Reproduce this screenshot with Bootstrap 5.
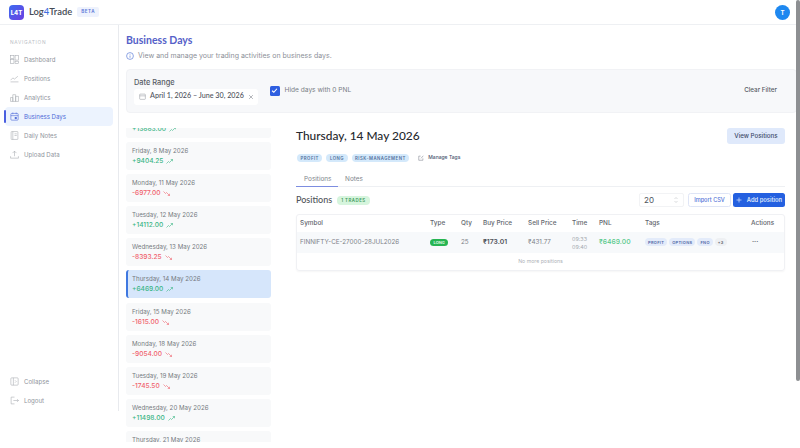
<!DOCTYPE html>
<html lang="en">
<head>
    <meta charset="UTF-8">
    <meta name="viewport" content="width=device-width, initial-scale=1.0">
    <title>Log4Trade - Business Days</title>
    <link href="https://cdn.jsdelivr.net/npm/bootstrap@5.3.0/dist/css/bootstrap.min.css" rel="stylesheet">
    <style>
        html, body { height: 100%; overflow: hidden; }
        body { font-family: "Inter", "Liberation Sans", sans-serif; font-size: 6.5px; color: #555b66; background: #fff; }
        .head-font { font-family: "Lato", "Inter", sans-serif; }
        svg { flex-shrink: 0; }

        .page-frame { height: 448px; width: 800px; position: relative; }
        .top-bar { height: 25px; padding: 0 9px 0 9px; border-bottom: 1px solid #eef0f3; }
        .logo-box { width: 15px; height: 15px; border-radius: 4px; background: linear-gradient(135deg, #3b6cf0, #6d3fe0); color: #fff; font-size: 6px; font-weight: 800; }
        .logo-name { font-size: 9.4px; font-weight: 600; color: #444a55; margin-left: 5px; font-family: "Lato", "Inter", sans-serif; }
        .logo-name b { color: #3f6fe0; font-weight: 600; }
        .beta-tag { font-size: 4.6px; letter-spacing: .5px; background: #eef2fd; color: #5b78d8; border-radius: 2px; padding: 2px 4px; margin-left: 5px; font-weight: 600; }
        .user-dot { width: 15px; height: 15px; border-radius: 50%; background: #1e88f0; color: #fff; font-size: 6px; font-weight: 700; margin-right: 1px; }

        .side-col { width: 119px; height: 386px; border-right: 1px solid #e8eaee; padding: 14px 5px 0 5px; flex-shrink: 0; }
        .side-label { font-size: 4.8px; letter-spacing: .7px; color: #b9bdc4; padding-left: 5px; margin-bottom: 4px; line-height: 7px; }
        .side-link { height: 19px; padding-left: 5px; color: #8f949c; font-size: 6.1px; border-radius: 4px; gap: 5px; }
        .side-link svg { width: 9px; height: 9px; flex-shrink: 0; }
        .side-on { background: #ecf3fe; color: #4f6bd8; position: relative; }
        .side-on::before { content: ""; position: absolute; left: -1px; top: 3px; bottom: 3px; width: 1.5px; background: #4a5fe0; border-radius: 1px; }
        .side-foot { margin-top: auto; padding-bottom: 1.5px; }
        .side-foot .side-link { height: 18.5px; }

        .main-col { padding: 9px 3px 0 7px; min-width: 0; }
        .page-title { font-size: 10.5px; font-weight: 700; color: #5561c8; line-height: 13px; }
        .page-sub { font-size: 7px; color: #8c9098; margin-top: 4px; line-height: 10px; gap: 4px; }
        .filter-box { height: 44px; background: #f7f8fa; border: 1px solid #f1f2f5; border-radius: 4px; margin-top: 8px; padding: 0 9px 0 7px; }
        .filter-label { font-size: 7.4px; font-weight: 500; color: #565b65; line-height: 9px; margin-bottom: 2px; }
        .date-field { width: 124px; height: 16px; background: #fff; border-radius: 3px; padding: 0 5px; color: #4f545d; font-size: 7.2px; font-weight: 500; gap: 4px; white-space: nowrap; font-family: "Lato", "Inter", sans-serif; }
        .check-mark { width: 9.5px; height: 9.5px; background: #2f5fe0; border-radius: 1.5px; }
        .hide-label { font-size: 6.6px; color: #787d85; margin-left: 5px; }
        .clear-btn { font-size: 6.3px; font-weight: 500; color: #575c65; margin-right: 10px; }

        .content-row { gap: 25px; margin-top: 15px; padding-right: 8px; }
        .day-list { width: 145px; height: 314px; overflow-y: scroll; scrollbar-width: none; flex-shrink: 0; }
        .day-item { height: 28px; margin-bottom: 4.1px; background: #f8f9fa; border-radius: 3px; padding: 4px 0 0 6px; }
        .day-name { font-size: 6.2px; color: #75797f; line-height: 10px; }
        .day-pnl { font-size: 6.6px; font-weight: 500; line-height: 11px; gap: 3px; }
        .pnl-up { color: #3bb585; }
        .pnl-down { color: #f0616d; }
        .day-on { background: #d6e6fb; border-left: 2px solid #3f78e0; padding-left: 4px; }

        .detail-col { min-width: 0; padding-right: 4px; }
        .detail-head { height: 16px; }
        .detail-title { font-size: 11.9px; font-weight: 500; color: #26292e; }
        .view-btn { width: 58px; height: 16px; padding: 0; background: #dfe9fb; border: 0; border-radius: 3px; font-size: 6.2px; font-weight: 500; color: #3d4a6a; }
        .tag-row { margin-top: 10px; height: 8px; gap: 4px; padding-left: 1px; }
        .tag-pill { font-size: 4.3px; letter-spacing: .5px; font-weight: 600; background: #d4e9fb; color: #53719b; border-radius: 4px; padding: 1.5px 3.5px; line-height: 5px; }
        .manage-tags { font-size: 5px; font-weight: 500; color: #4c5370; margin-left: 5px; gap: 4px; }
        .tab-bar { margin-top: 9px; height: 15.5px; border-bottom: 1px solid #eef0f3; }
        .tab-item { font-size: 6.4px; color: #80858c; padding: 0 8px; line-height: 16px; width: 42px; text-align: center; }
        .tab-on { border-bottom: 1px solid #7d8de0; height: 15.5px; }
        .tab-next { width: 32px; padding: 0; }

        .pos-row { height: 14px; margin-top: 6.5px; }
        .pos-title { font-size: 9px; font-weight: 500; color: #4f535a; }
        .count-tag { font-size: 4.4px; letter-spacing: .5px; font-weight: 600; background: #d6f5dd; color: #3f9a5c; border-radius: 4px; padding: 2px 4px; line-height: 5px; margin-left: 5px; }
        .size-box { width: 45px; height: 14px; background: #fff; border: 1px solid #f2f3f5; border-radius: 2px; padding: 0 5px 0 4px; font-size: 8px; color: #50555d; }
        .import-btn { width: 43px; height: 14px; padding: 0; margin-left: 4px; background: #fff; border: 1px solid #dfe5f6; border-radius: 2.5px; font-size: 5.6px; font-weight: 500; color: #5474d8; }
        .add-btn { width: 52px; height: 14px; padding: 0; margin-left: 2px; background: #2460e0; border: 0; border-radius: 2.5px; font-size: 5.8px; font-weight: 600; color: #dce6fb; gap: 5px; }

        .trade-wrap { margin-top: 7px; border: 1px solid #f0f1f4; border-radius: 3px; box-shadow: 0 1px 2px rgba(0, 0, 0, .04); }
        .trade-table { table-layout: fixed; width: 100%; margin: 0; --bs-table-bg: transparent; }
        .trade-table th { font-size: 6.4px; font-weight: 500; color: #62666d; height: 17px; padding: 0 0 0 3px; vertical-align: middle; border: 0; }
        .trade-table td { font-size: 6.3px; color: #7d8188; height: 21px; padding: 0 0 0 3px; vertical-align: middle; border: 0; }
        .trade-table .trade-row td { background: #f7f9fb; }
        .trade-table .empty-cell { height: 17px; padding: 0; text-align: center; font-size: 5.2px; color: #aeb2b8; }
        .w-sym { width: 130px; }
        .w-type { width: 31px; }
        .w-qty { width: 22px; }
        .w-buy { width: 45px; }
        .w-sell { width: 44px; }
        .w-time { width: 27px; }
        .w-pnl { width: 46px; }
        .w-tags { width: 106px; }
        .long-tag { font-size: 4px; font-weight: 700; background: #27b552; color: #d9f6e2; border-radius: 4px; padding: 1.5px 3.5px; line-height: 4px; display: inline-block; }
        .trade-table td.buy-val { font-weight: 600; color: #4e5259; font-size: 6.8px; }
        .trade-table td.time-val { font-size: 5.4px; line-height: 8px; color: #a5a9af; }
        .trade-table td.pnl-val { font-size: 6.8px; font-weight: 500; color: #57c98b; }
        .trade-table td.dots-cell { color: #62666d; font-weight: 700; padding-left: 4px; }
        .mini-tag { font-size: 4px; letter-spacing: .3px; font-weight: 600; background: #e3ebfa; color: #5069a6; border-radius: 4px; padding: 1.5px 3px; line-height: 5px; margin-right: 2px; display: inline-block; }
        .mini-more { background: #eef0f3; color: #62666d; }

        .scroll-thumb { position: absolute; top: 0; right: 0; width: 4px; height: 381px; background: #8d8f92; border-radius: 2px; }
    </style>
</head>
<body>
    <div class="page-frame d-flex flex-column">
        <header class="top-bar d-flex align-items-center justify-content-between">
            <div class="d-flex align-items-center">
                <div class="logo-box d-flex align-items-center justify-content-center">L4T</div>
                <span class="logo-name">Log<b>4</b>Trade</span>
                <span class="beta-tag">BETA</span>
            </div>
            <div class="user-dot d-flex align-items-center justify-content-center">T</div>
        </header>

        <div class="d-flex flex-grow-1">
            <nav class="side-col d-flex flex-column">
                <div class="side-label">NAVIGATION</div>
                <div class="side-link d-flex align-items-center">
                    <svg viewBox="0 0 16 16" fill="none" stroke="#a5a9af" stroke-width="1"><rect x="1" y="1" width="6" height="5"/><rect x="9" y="1" width="6" height="8"/><rect x="1" y="8" width="6" height="7"/><rect x="9" y="11" width="6" height="4"/></svg>
                    Dashboard
                </div>
                <div class="side-link d-flex align-items-center">
                    <svg viewBox="0 0 16 16" fill="none" stroke="#a5a9af" stroke-width="1"><path d="M1 14h14M1 11l4-4 3 2 6-5"/></svg>
                    Positions
                </div>
                <div class="side-link d-flex align-items-center">
                    <svg viewBox="0 0 16 16" fill="none" stroke="#a5a9af" stroke-width="1"><path d="M1 15V8h4v7M5 15V3h5v12M10 15V6h5v9M1 15h14"/></svg>
                    Analytics
                </div>
                <div class="side-link side-on d-flex align-items-center">
                    <svg viewBox="0 0 16 16" fill="none" stroke="#4f6bd8" stroke-width="1.1"><rect x="1.5" y="2.5" width="13" height="12" rx="1.5"/><path d="M1.5 6.5h13M5 1v3M11 1v3"/><rect x="9" y="9.5" width="2.5" height="2.5" fill="#4f6bd8"/></svg>
                    Business Days
                </div>
                <div class="side-link d-flex align-items-center">
                    <svg viewBox="0 0 16 16" fill="none" stroke="#a5a9af" stroke-width="1"><rect x="2" y="1" width="12" height="14" rx="1"/><path d="M5 1v14M8 5h4M8 8h4"/></svg>
                    Daily Notes
                </div>
                <div class="side-link d-flex align-items-center">
                    <svg viewBox="0 0 16 16" fill="none" stroke="#a5a9af" stroke-width="1"><path d="M8 11V2M4.5 5.5 8 2l3.5 3.5M1 11v3.5h14V11"/></svg>
                    Upload Data
                </div>
                <div class="side-foot">
                    <div class="side-link d-flex align-items-center">
                        <svg viewBox="0 0 16 16" fill="none" stroke="#a5a9af" stroke-width="1"><rect x="1.5" y="1.5" width="13" height="13" rx="1.5"/><path d="M6 1.5v13M9 6l2 2-2 2"/></svg>
                        Collapse
                    </div>
                    <div class="side-link d-flex align-items-center">
                        <svg viewBox="0 0 16 16" fill="none" stroke="#a5a9af" stroke-width="1"><path d="M8 2H2v12h6M6 8h9M12.5 5.5 15 8l-2.5 2.5"/></svg>
                        Logout
                    </div>
                </div>
            </nav>

            <main class="main-col flex-grow-1">
                <div class="page-title head-font">Business Days</div>
                <div class="page-sub d-flex align-items-center">
                    <svg width="8" height="8" viewBox="0 0 16 16" fill="none" stroke="#5f7fd8" stroke-width="1.4"><circle cx="8" cy="8" r="6.8"/><path d="M8 7v4.5M8 4.3v1.2"/></svg>
                    View and manage your trading activities on business days.
                </div>

                <section class="filter-box d-flex align-items-center justify-content-between">
                    <div class="d-flex align-items-center">
                        <div>
                            <div class="filter-label">Date Range</div>
                            <div class="date-field d-flex align-items-center">
                                <svg width="7" height="7" viewBox="0 0 16 16" fill="none" stroke="#9a9ea5" stroke-width="1.3"><rect x="1.5" y="2.5" width="13" height="12" rx="1.5"/><path d="M1.5 6.5h13"/></svg>
                                <span class="flex-grow-1">April 1, 2026 – June 30, 2026</span>
                                <svg width="6" height="6" viewBox="0 0 16 16" fill="none" stroke="#83878e" stroke-width="1.6"><path d="M3 3l10 10M13 3 3 13"/></svg>
                            </div>
                        </div>
                        <div class="d-flex align-items-center ms-2 ps-1">
                            <div class="check-mark d-flex align-items-center justify-content-center">
                                <svg width="7" height="7" viewBox="0 0 16 16" fill="none" stroke="#fff" stroke-width="2.6"><path d="M2.5 8.5 6.5 12 13.5 4"/></svg>
                            </div>
                            <span class="hide-label">Hide days with 0 PNL</span>
                        </div>
                    </div>
                    <span class="clear-btn">Clear Filter</span>
                </section>

                <div class="content-row d-flex">
                    <div class="day-list" id="dayList">
                        <div class="day-item"><div class="day-name">Thursday, 7 May 2026</div><div class="day-pnl pnl-up d-flex align-items-center">+13883.00 <svg width="7" height="5" viewBox="0 0 14 10" fill="none" stroke="currentColor" stroke-width="1.2"><path d="M1 9l4-4 2 2 6-6M9.5 1H13v3.5"/></svg></div></div>
                        <div class="day-item"><div class="day-name">Friday, 8 May 2026</div><div class="day-pnl pnl-up d-flex align-items-center">+9404.25 <svg width="7" height="5" viewBox="0 0 14 10" fill="none" stroke="currentColor" stroke-width="1.2"><path d="M1 9l4-4 2 2 6-6M9.5 1H13v3.5"/></svg></div></div>
                        <div class="day-item"><div class="day-name">Monday, 11 May 2026</div><div class="day-pnl pnl-down d-flex align-items-center">-6977.00 <svg width="7" height="5" viewBox="0 0 14 10" fill="none" stroke="currentColor" stroke-width="1.2"><path d="M1 1l4 4 2-2 6 6M9.5 9H13V5.5"/></svg></div></div>
                        <div class="day-item"><div class="day-name">Tuesday, 12 May 2026</div><div class="day-pnl pnl-up d-flex align-items-center">+14112.00 <svg width="7" height="5" viewBox="0 0 14 10" fill="none" stroke="currentColor" stroke-width="1.2"><path d="M1 9l4-4 2 2 6-6M9.5 1H13v3.5"/></svg></div></div>
                        <div class="day-item"><div class="day-name">Wednesday, 13 May 2026</div><div class="day-pnl pnl-down d-flex align-items-center">-8393.25 <svg width="7" height="5" viewBox="0 0 14 10" fill="none" stroke="currentColor" stroke-width="1.2"><path d="M1 1l4 4 2-2 6 6M9.5 9H13V5.5"/></svg></div></div>
                        <div class="day-item day-on"><div class="day-name">Thursday, 14 May 2026</div><div class="day-pnl pnl-up d-flex align-items-center">+6469.00 <svg width="7" height="5" viewBox="0 0 14 10" fill="none" stroke="currentColor" stroke-width="1.2"><path d="M1 9l4-4 2 2 6-6M9.5 1H13v3.5"/></svg></div></div>
                        <div class="day-item"><div class="day-name">Friday, 15 May 2026</div><div class="day-pnl pnl-down d-flex align-items-center">-1615.00 <svg width="7" height="5" viewBox="0 0 14 10" fill="none" stroke="currentColor" stroke-width="1.2"><path d="M1 1l4 4 2-2 6 6M9.5 9H13V5.5"/></svg></div></div>
                        <div class="day-item"><div class="day-name">Monday, 18 May 2026</div><div class="day-pnl pnl-down d-flex align-items-center">-9054.00 <svg width="7" height="5" viewBox="0 0 14 10" fill="none" stroke="currentColor" stroke-width="1.2"><path d="M1 1l4 4 2-2 6 6M9.5 9H13V5.5"/></svg></div></div>
                        <div class="day-item"><div class="day-name">Tuesday, 19 May 2026</div><div class="day-pnl pnl-down d-flex align-items-center">-1745.50 <svg width="7" height="5" viewBox="0 0 14 10" fill="none" stroke="currentColor" stroke-width="1.2"><path d="M1 1l4 4 2-2 6 6M9.5 9H13V5.5"/></svg></div></div>
                        <div class="day-item"><div class="day-name">Wednesday, 20 May 2026</div><div class="day-pnl pnl-up d-flex align-items-center">+11498.00 <svg width="7" height="5" viewBox="0 0 14 10" fill="none" stroke="currentColor" stroke-width="1.2"><path d="M1 9l4-4 2 2 6-6M9.5 1H13v3.5"/></svg></div></div>
                        <div class="day-item"><div class="day-name">Thursday, 21 May 2026</div><div class="day-pnl pnl-up d-flex align-items-center">+5210.00</div></div>
                    </div>

                    <div class="detail-col flex-grow-1">
                        <div class="detail-head d-flex align-items-center justify-content-between">
                            <span class="detail-title head-font">Thursday, 14 May 2026</span>
                            <button class="view-btn btn">View Positions</button>
                        </div>
                        <div class="tag-row d-flex align-items-center">
                            <span class="tag-pill">PROFIT</span>
                            <span class="tag-pill">LONG</span>
                            <span class="tag-pill">RISK-MANAGEMENT</span>
                            <span class="manage-tags d-flex align-items-center">
                                <svg width="6" height="6" viewBox="0 0 16 16" fill="none" stroke="#6d7280" stroke-width="1.3"><path d="M13 9v5H2V3h5M8 9l6-7"/></svg>
                                Manage Tags
                            </span>
                        </div>
                        <div class="tab-bar d-flex">
                            <div class="tab-item tab-on">Positions</div>
                            <div class="tab-item tab-next">Notes</div>
                        </div>
                        <div class="pos-row d-flex align-items-center justify-content-between">
                            <div class="d-flex align-items-center">
                                <span class="pos-title head-font">Positions</span>
                                <span class="count-tag">1 TRADES</span>
                            </div>
                            <div class="d-flex align-items-center">
                                <div class="size-box d-flex align-items-center justify-content-between">
                                    <span>20</span>
                                    <svg width="4" height="6" viewBox="0 0 8 12" fill="none" stroke="#b3b6bb" stroke-width="1"><path d="M1 4l3-3 3 3M1 8l3 3 3-3"/></svg>
                                </div>
                                <button class="import-btn btn">Import CSV</button>
                                <button class="add-btn btn d-flex align-items-center justify-content-center">
                                    <svg width="6" height="6" viewBox="0 0 12 12" fill="none" stroke="#dce6fb" stroke-width="1.4"><path d="M6 1v10M1 6h10"/></svg>
                                    Add position
                                </button>
                            </div>
                        </div>
                        <div class="trade-wrap">
                            <table class="table trade-table">
                                <colgroup>
                                    <col class="w-sym"><col class="w-type"><col class="w-qty"><col class="w-buy"><col class="w-sell"><col class="w-time"><col class="w-pnl"><col class="w-tags"><col>
                                </colgroup>
                                <thead>
                                    <tr><th>Symbol</th><th>Type</th><th>Qty</th><th>Buy Price</th><th>Sell Price</th><th>Time</th><th>PNL</th><th>Tags</th><th>Actions</th></tr>
                                </thead>
                                <tbody>
                                    <tr class="trade-row">
                                        <td>FINNIFTY-CE-27000-28JUL2026</td>
                                        <td><span class="long-tag">LONG</span></td>
                                        <td>25</td>
                                        <td class="buy-val">₹173.01</td>
                                        <td>₹431.77</td>
                                        <td class="time-val">09:33<br>09:40</td>
                                        <td class="pnl-val">₹6469.00</td>
                                        <td><span class="mini-tag">PROFIT</span><span class="mini-tag">OPTIONS</span><span class="mini-tag">FNO</span><span class="mini-tag mini-more">+3</span></td>
                                        <td class="dots-cell">···</td>
                                    </tr>
                                    <tr><td colspan="9" class="empty-cell">No more positions</td></tr>
                                </tbody>
                            </table>
                        </div>
                    </div>
                </div>
            </main>
        </div>
        <div class="scroll-thumb"></div>
    </div>

    <script src="https://cdn.jsdelivr.net/npm/bootstrap@5.3.0/dist/js/bootstrap.bundle.min.js"></script>
    <script>
        // list is already scrolled a bit in the screenshot
        document.getElementById('dayList').scrollTop = 18;
    </script>
</body>
</html>
